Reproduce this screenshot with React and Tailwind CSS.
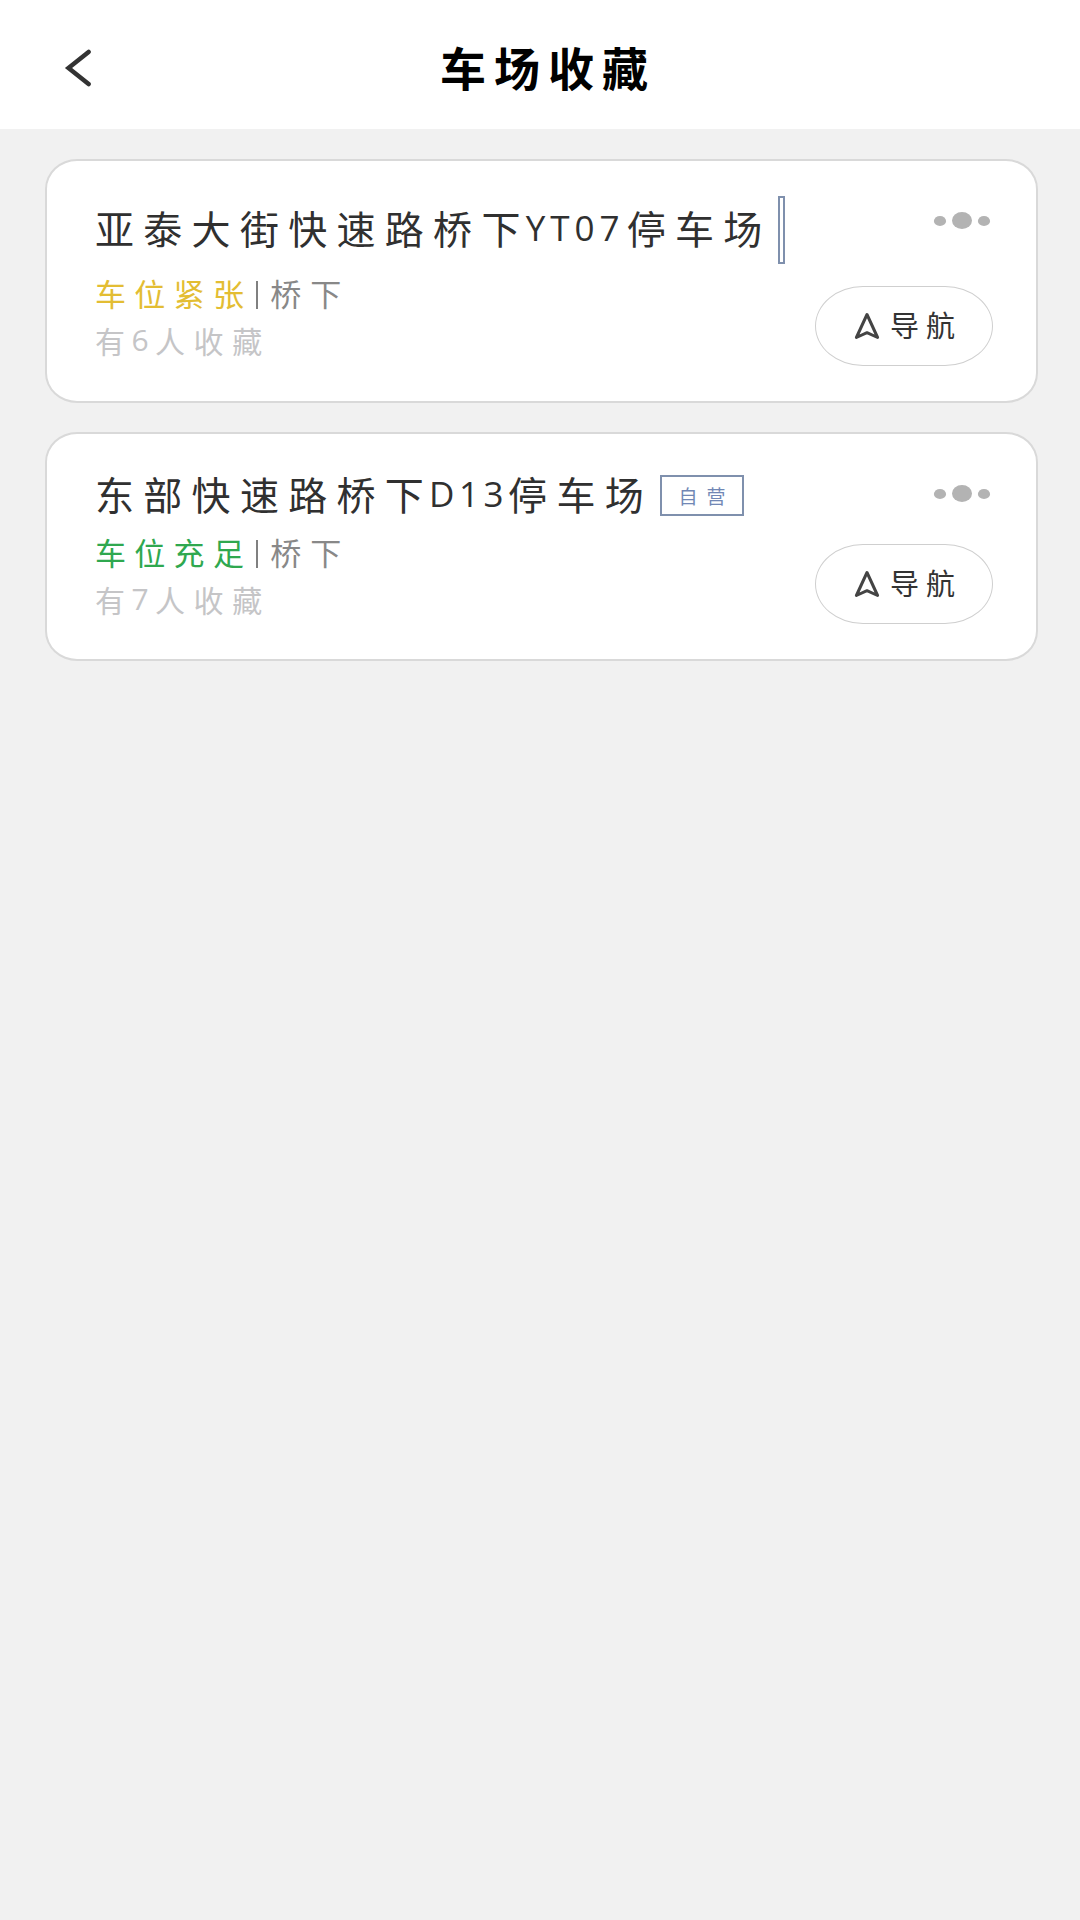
const lots = [
  {
    id: 1,
    name: ["亚泰大街快速路桥下", "YT07", "停车场"],
    codeClass: "-ml-[4px] w-[101px] tracking-[5px]",
    tag: "",
    tagClass: "ml-[6px] h-[68px] w-[7px] border-[2.5px]",
    status: "车位紧张",
    statusClass: "text-[#e3bd33]",
    count: 6,
    cardClass: "h-[244px]",
    titleClass: "mt-[35px] h-[68px]",
    nameClass: "pb-[5px]",
    statusRowClass: "mt-[7px]",
    navClass: "mt-[55px]",
  },
  {
    id: 2,
    name: ["东部快速路桥下", "D13", "停车场"],
    codeClass: "-ml-[4px] w-[79px] tracking-[4.5px]",
    tag: "自营",
    tagClass: "ml-[7px] h-[41px] w-[84px] border-2",
    status: "车位充足",
    statusClass: "text-[#2fa84f]",
    count: 7,
    cardClass: "h-[229px]",
    titleClass: "mt-[41px] h-[41px]",
    nameClass: "pb-[4px]",
    statusRowClass: "mt-[14px]",
    navClass: "mt-[40px]",
  },
];

function MoreDots() {
  return (
    <svg width="58" height="20" viewBox="0 0 58 20" fill="#b3b3b3" aria-hidden="true">
      <ellipse cx="7" cy="10" rx="6.1" ry="5.1" />
      <ellipse cx="29" cy="9.5" rx="10" ry="8.4" />
      <ellipse cx="51" cy="10" rx="6.1" ry="5.1" />
    </svg>
  );
}

function NavButton({ className }) {
  return (
    <button
      className={`mr-px flex h-[80px] w-[178px] items-center rounded-[48px/40px] border-[1.5px] border-[#cfcfcf] bg-white pl-[38px] ${className}`}
    >
      <svg width="26" height="29" viewBox="0 0 26 29" fill="none" stroke="#444444" strokeWidth="3" strokeLinejoin="round" className="shrink-0">
        <path d="M13 2.5 L23.6 25.5 L13 20.7 L2.4 25.5 Z" />
      </svg>
      <span className="ml-[10px] pb-[4px] text-[29px] leading-none tracking-[7px] whitespace-nowrap text-[#333333]">导航</span>
    </button>
  );
}

function LotCard({ lot }) {
  return (
    <article
      className={`flex w-[993px] justify-between rounded-[32px/30px] border-[2.5px] border-[#d9d9d9] bg-white pr-[42px] pl-[48px] ${lot.cardClass}`}
    >
      <div className="flex flex-col">
        <div className={`flex items-center whitespace-nowrap ${lot.titleClass}`}>
          <h2 className={`flex items-center text-[39px] leading-none tracking-[9.3px] text-[#303030] ${lot.nameClass}`}>
            <span>{lot.name[0]}</span>
            <span className={`font-['Open_Sans','Noto_Sans_CJK_SC',sans-serif] text-[35px] ${lot.codeClass}`}>
              {lot.name[1]}
            </span>
            <span>{lot.name[2]}</span>
          </h2>
          <div
            className={`flex items-center justify-center border-[#7f90ad] text-[19px] leading-none tracking-[9px] text-[#7187b5] ${lot.tagClass}`}
          >
            {lot.tag && <span className="pb-px pl-[9px]">{lot.tag}</span>}
          </div>
        </div>
        <div className={`flex h-[48px] items-center text-[31px] leading-none whitespace-nowrap ${lot.statusRowClass}`}>
          <span className={`pb-[5px] tracking-[8.3px] ${lot.statusClass}`}>{lot.status}</span>
          <span className="ml-[4px] h-[28px] w-[2px] bg-[#808080]" />
          <span className="ml-[12px] pb-[5px] tracking-[9px] text-[#888888]">桥下</span>
        </div>
        <div className="flex h-[46px] items-center pb-[4px] text-[30px] leading-none whitespace-nowrap text-[#c5c5c7]">
          <span>有</span>
          <span className="w-[30px] text-center font-['Open_Sans','Noto_Sans_CJK_SC',sans-serif]">{lot.count}</span>
          <span className="tracking-[8.6px]">人收藏</span>
        </div>
      </div>
      <div className="flex flex-col items-end">
        <button className="mt-[50px] mr-[3px] h-[20px]" aria-label="更多">
          <MoreDots />
        </button>
        <NavButton className={lot.navClass} />
      </div>
    </article>
  );
}

export default function App() {
  return (
    <div className="h-[1920px] w-[1080px] overflow-hidden bg-[#f1f1f1] font-['Noto_Sans_CJK_SC',sans-serif]">
      <header className="grid h-[129px] grid-cols-[120px_1fr_120px] items-center bg-white">
        <button className="mt-[7px] ml-[64px] w-[28px]" aria-label="返回">
          <svg width="28" height="38" viewBox="0 0 28 38" fill="none" stroke="#333333" strokeWidth="4.5" strokeLinecap="round" strokeLinejoin="miter">
            <path d="M24.6 3 L4.5 19 L24.6 35" />
          </svg>
        </button>
        <h1 className="mt-[2px] pl-[16px] text-center text-[46px] leading-none font-bold tracking-[8px] text-black">
          车场收藏
        </h1>
      </header>
      <main className="flex flex-col gap-[29px] pt-[30px] pl-[45px]">
        {lots.map((lot) => (
          <LotCard key={lot.id} lot={lot} />
        ))}
      </main>
    </div>
  );
}
